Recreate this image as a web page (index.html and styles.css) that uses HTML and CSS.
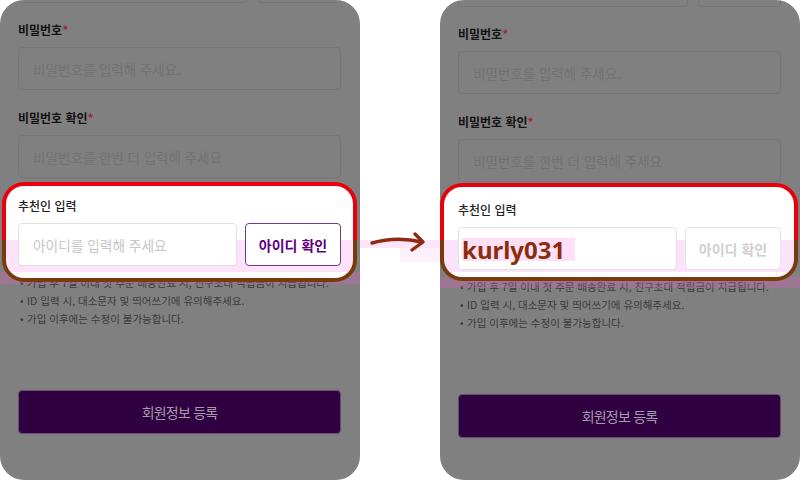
FILE: index.html
```html
<!DOCTYPE html>
<html lang="ko">
<head>
<meta charset="utf-8">
<title>추천인 입력</title>
<link rel="stylesheet" href="styles.css">
</head>
<body>
<div class="stage">
  <section class="phone">
    <div class="strip"></div>
    <div class="prev-row"><div class="prev-input"></div><div class="prev-btn"></div></div>
    <div class="label">비밀번호<span class="req">*</span></div>
    <div class="input">비밀번호를 입력해 주세요.</div>
    <div class="label label--second">비밀번호 확인<span class="req">*</span></div>
    <div class="input">비밀번호를 한번 더 입력해 주세요</div>
    <div class="ref-box">
      <div class="ref-inner">
        <div class="ref-label">추천인 입력</div>
        <div class="ref-row">
          <div class="ref-input">아이디를 입력해 주세요</div>
          <div class="ref-btn">아이디 확인</div>
        </div>
      </div>
    </div>
    <ul class="notes">
      <li>가입 후 7일 이내 첫 주문 배송완료 시, 친구초대 적립금이 지급됩니다.</li>
      <li>ID 입력 시, 대소문자 및 띄어쓰기에 유의해주세요.</li>
      <li>가입 이후에는 수정이 불가능합니다.</li>
    </ul>
    <div class="submit">회원정보 등록</div>
  </section>

  <div class="gap">
    <svg class="arrow" width="80" height="40" viewBox="0 0 80 40">
      <rect x="0" y="12" width="80" height="8" fill="#fde6fa"/>
      <rect x="40" y="20" width="40" height="14" fill="#fef1fc"/>
      <path d="M12 15 Q 36 8 62 14" fill="none" stroke="#8e2a12" stroke-width="3.4" stroke-linecap="round"/>
      <path d="M55 6 L63 14 L52 22" fill="none" stroke="#8e2a12" stroke-width="3.4" stroke-linecap="round" stroke-linejoin="round"/>
    </svg>
  </div>

  <section class="phone phone--after">
    <div class="strip"></div>
    <div class="prev-row"><div class="prev-input"></div><div class="prev-btn"></div></div>
    <div class="label">비밀번호<span class="req">*</span></div>
    <div class="input">비밀번호를 입력해 주세요.</div>
    <div class="label label--second">비밀번호 확인<span class="req">*</span></div>
    <div class="input">비밀번호를 한번 더 입력해 주세요</div>
    <div class="ref-box">
      <div class="ref-inner">
        <div class="ref-label">추천인 입력</div>
        <div class="ref-row">
          <div class="ref-input ref-input--filled"><span class="typed">kurly031</span></div>
          <div class="ref-btn ref-btn--off">아이디 확인</div>
        </div>
      </div>
    </div>
    <ul class="notes">
      <li>가입 후 7일 이내 첫 주문 배송완료 시, 친구초대 적립금이 지급됩니다.</li>
      <li>ID 입력 시, 대소문자 및 띄어쓰기에 유의해주세요.</li>
      <li>가입 이후에는 수정이 불가능합니다.</li>
    </ul>
    <div class="submit">회원정보 등록</div>
  </section>
</div>
</body>
</html>
```

FILE: styles.css
```css
html, body {
  margin: 0;
  padding: 0;
}
body {
  width: 800px;
  height: 480px;
  overflow: hidden;
  background: #fff;
  font-family: "Noto Sans CJK KR", "Noto Sans", sans-serif;
}
.stage {
  display: flex;
  height: 480px;
}
.phone {
  position: relative;
  flex: none;
  width: 360px;
  height: 480px;
  box-sizing: border-box;
  padding: 0 19px 0 18px;
  background: #808080;
  border-radius: 24px;
  overflow: hidden;
}
.phone--after {
  padding-top: 4px;
}
.gap {
  flex: none;
  width: 80px;
  padding-top: 228px;
  box-sizing: border-box;
}
.arrow {
  display: block;
}
.strip {
  position: absolute;
  left: 0;
  right: 0;
  top: 272px;
  height: 12px;
  background: rgba(240, 90, 200, 0.26);
  z-index: 1;
}
.phone--after .strip {
  top: 277px;
  height: 11px;
}

.prev-row {
  display: flex;
  gap: 10px;
  height: 40px;
  margin-top: -37px;
}
.prev-input {
  flex: 0 0 230px;
  box-sizing: border-box;
  border: 1px solid #767676;
  border-radius: 4px;
}
.prev-btn {
  flex: 1;
  box-sizing: border-box;
  border: 1px solid #767676;
  border-radius: 4px;
}

.label {
  margin-top: 19px;
  font-size: 12px;
  font-weight: 700;
  line-height: 16px;
  color: #111;
}
.label--second {
  margin-top: 20px;
}
.req {
  color: #9c2a3a;
}
.input {
  display: flex;
  align-items: center;
  height: 43px;
  margin-top: 9px;
  box-sizing: border-box;
  padding-left: 14px;
  border: 1px solid #767676;
  border-radius: 4px;
  font-size: 13.5px;
  color: #727272;
}

.ref-box {
  position: relative;
  z-index: 2;
  width: 355px;
  margin: 4px 0 -8px -16px;
  box-sizing: border-box;
  padding: 4px;
  border-radius: 22px;
  background: linear-gradient(#e8000d 0 58px, #7a3b0c 58px);
}
.ref-inner {
  padding: 12px 12px 12px 12px;
  border-radius: 18px;
  background: linear-gradient(#fff 0 54px, #fde3f9 54px 86px, #fff 86px);
}
.phone--after .ref-box {
  width: 358px;
  margin: 1px 0 -3px -18px;
  background: linear-gradient(#e8000d 0 57px, #7a3b0c 57px);
}
.phone--after .ref-inner {
  padding: 15px 13px 7px 14px;
  background: linear-gradient(#fff 0 53px, #fde3f9 53px 85px, #fff 85px);
}
.ref-label {
  font-size: 12px;
  font-weight: 500;
  line-height: 16px;
  color: #222;
}
.ref-row {
  display: flex;
  gap: 8px;
  height: 43px;
  margin-top: 9px;
}
.ref-input {
  display: flex;
  align-items: center;
  flex: 0 0 219px;
  box-sizing: border-box;
  padding-left: 14px;
  border: 1px solid #e0e0e0;
  border-radius: 4px;
  background: #fff;
  font-size: 13.7px;
  color: #c6c6c6;
}
.ref-input--filled {
  padding-left: 3px;
}
.typed {
  margin-top: 2px;
  padding-right: 10px;
  font-family: "Noto Sans", sans-serif;
  font-size: 24px;
  font-weight: 700;
  line-height: 23px;
  color: #8b2c0c;
  background: #fde0f8;
}
.ref-btn {
  display: flex;
  align-items: center;
  justify-content: center;
  flex: 0 0 96px;
  box-sizing: border-box;
  border: 1px solid #6b3d87;
  border-radius: 4px;
  background: #fff;
  font-size: 14px;
  font-weight: 700;
  color: #5f0080;
}
.ref-btn--off {
  border-color: #e4e4e4;
  color: #d0d0d0;
}

.notes {
  list-style: none;
  margin: 0;
  padding: 0 0 0 2px;
  font-size: 10.5px;
  line-height: 18px;
  color: #3b3b3b;
  white-space: nowrap;
}
.notes li::before {
  content: "\2022";
  display: inline-block;
  width: 7px;
}

.submit {
  display: flex;
  align-items: center;
  justify-content: center;
  height: 44px;
  margin-top: 62px;
  box-sizing: border-box;
  border: 1px solid #6a4c74;
  border-radius: 4px;
  background: #2f0140;
  font-size: 14px;
  letter-spacing: -0.8px;
  color: #a999ad;
}
```
